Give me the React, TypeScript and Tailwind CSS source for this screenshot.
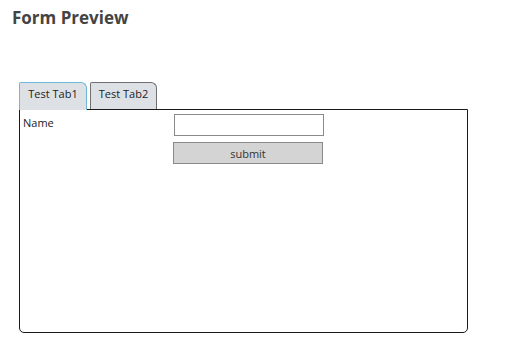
export default function App() {
  return (
    <div className="w-[507px] h-[351px] bg-white font-['Open_Sans',sans-serif] text-[#222]">
      <div className="pl-[12px] pt-[6px]">
        <h1 className="text-[17px] leading-[24px] font-bold text-[#444]">Form Preview</h1>
      </div>

      <div className="ml-[19px] mt-[52px] w-[449px]">
        {/* tab strip */}
        <div className="flex items-end gap-[3px]">
          <div className="relative z-10 -mb-px h-[28px] w-[68px] border-x border-t border-[#6cb8d9] rounded-tl-[2px] rounded-tr-[6px] bg-[#dde1e6] pt-[3px] text-center text-[11px] leading-[15px]">
            Test Tab1
          </div>
          <div className="h-[27px] w-[67px] border-x border-t border-[#707070] rounded-tl-[2px] rounded-tr-[6px] bg-[#dde1e6] pt-[3px] text-center text-[11px] leading-[15px]">
            Test Tab2
          </div>
        </div>

        {/* tab panel */}
        <div className="h-[224px] border border-[#1a1a1a] rounded-b-[5px] pl-[3px] pt-[4px]">
          <div className="grid grid-cols-[150px_150px] gap-y-[6px]">
            <label className="mt-px text-[11px] leading-[15px]">Name</label>
            <input
              type="text"
              className="ml-px h-[22px] w-[150px] border border-[#8a8a8a] bg-white outline-none"
            />
            <div />
            <button className="h-[22px] w-[150px] border border-[#8a8a8a] bg-[#d4d4d4] text-[11px] leading-[15px] text-[#333]">
              submit
            </button>
          </div>
        </div>
      </div>
    </div>
  );
}
